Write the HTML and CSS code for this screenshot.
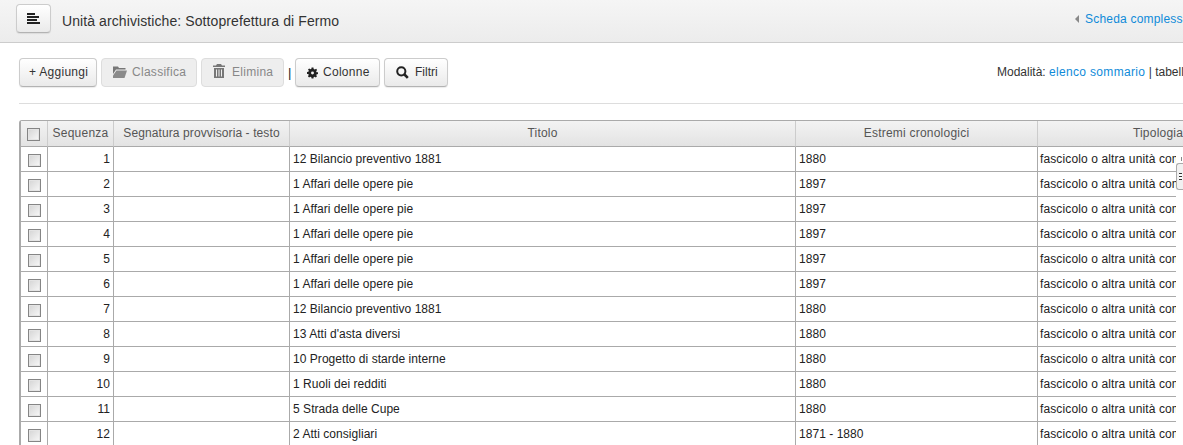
FILE: index.html
```html
<!DOCTYPE html>
<html lang="it">
<head>
<meta charset="utf-8">
<title>Unità archivistiche</title>
<link rel="stylesheet" href="styles.css">
</head>
<body>
<header class="topbar">
  <button class="btn menu-btn" type="button" aria-label="Menu">
    <svg width="13" height="11" viewBox="0 0 13 11"><path d="M0 0h8v2H0zM0 3h12v2H0zM0 6h10v2H0zM0 9h13v2H0z" fill="#222"/></svg>
  </button>
  <h1 class="page-title">Unità archivistiche: Sottoprefettura di Fermo</h1>
  <div class="top-link"><span class="arrow"></span><a href="#">Scheda complessiva</a></div>
</header>
<section class="toolbar">
  <div class="actions">
    <button class="btn btn-add" type="button">+ Aggiungi</button>
    <button class="btn disabled btn-class" type="button">
      <svg width="14" height="12" viewBox="0 0 14 12"><path d="M0 1.500V.5h5l1 1.500h6.500v1.500H3L0 8z" fill="#777"/><path d="M3.500 4.500H14L11.500 12H0V9.500z" fill="#8a8a8a"/></svg>Classifica</button>
    <button class="btn disabled btn-del" type="button">
      <svg width="12" height="14" viewBox="0 0 12 14"><path d="M4 0h4l1 1.500h3V3H0V1.500h3zM1 4h10v10H1zM3 5.500v7h1v-7zM5.500 5.500v7h1v-7zM8 5.500v7h1v-7z" fill="#777" fill-rule="evenodd"/></svg>Elimina</button>
    <span class="pipe">|</span>
    <button class="btn btn-cols" type="button">
      <svg width="11" height="12" viewBox="0 0 12 12"><path d="M5 0h2l.3 1.700 1.200.5L10 1.300 11 2.700 10 4l.4 1.100L12 5.300v1.900l-1.600.4L10 8.300l.9 1.300-1.300 1.300-1.300-.9-1.100.5L7 12H5l-.3-1.500-1.100-.5-1.300.9L1 9.600l.9-1.300-.5-1.100L0 7V5l1.500-.3.500-1.100L1.100 2.300 2.400 1l1.300.9 1.100-.5zM6 4.400a1.600 1.600 0 100 3.200 1.600 1.600 0 000-3.200z" fill="#222" fill-rule="evenodd"/></svg>Colonne</button>
    <button class="btn btn-filter" type="button">
      <svg width="13" height="13" viewBox="0 0 13 13"><circle cx="5.300" cy="5.300" r="4.100" fill="none" stroke="#222" stroke-width="2"/><path d="M8.500 8.500l3.300 3.300" stroke="#222" stroke-width="2.600"/></svg>Filtri</button>
  </div>
  <div class="mode">Modalità: <a href="#">elenco sommario</a> | tabella</div>
</section>
<hr class="rule">
<div class="grid-wrap">
  <table class="grid">
    <colgroup>
      <col class="c-check"><col class="c-seq"><col class="c-seg"><col class="c-title"><col class="c-date"><col class="c-type">
    </colgroup>
    <thead>
      <tr>
        <th><span class="check"></span></th>
        <th>Sequenza</th>
        <th class="seg-head">Segnatura provvisoria - testo</th>
        <th>Titolo</th>
        <th>Estremi cronologici</th>
        <th>Tipologia</th>
      </tr>
    </thead>
    <tbody>
      <tr><td><span class="check"></span></td><td class="num">1</td><td></td><td>12 Bilancio preventivo 1881</td><td>1880</td><td class="type">fascicolo o altra unità complessa</td></tr>
      <tr><td><span class="check"></span></td><td class="num">2</td><td></td><td>1 Affari delle opere pie</td><td>1897</td><td class="type">fascicolo o altra unità complessa</td></tr>
      <tr><td><span class="check"></span></td><td class="num">3</td><td></td><td>1 Affari delle opere pie</td><td>1897</td><td class="type">fascicolo o altra unità complessa</td></tr>
      <tr><td><span class="check"></span></td><td class="num">4</td><td></td><td>1 Affari delle opere pie</td><td>1897</td><td class="type">fascicolo o altra unità complessa</td></tr>
      <tr><td><span class="check"></span></td><td class="num">5</td><td></td><td>1 Affari delle opere pie</td><td>1897</td><td class="type">fascicolo o altra unità complessa</td></tr>
      <tr><td><span class="check"></span></td><td class="num">6</td><td></td><td>1 Affari delle opere pie</td><td>1897</td><td class="type">fascicolo o altra unità complessa</td></tr>
      <tr><td><span class="check"></span></td><td class="num">7</td><td></td><td>12 Bilancio preventivo 1881</td><td>1880</td><td class="type">fascicolo o altra unità complessa</td></tr>
      <tr><td><span class="check"></span></td><td class="num">8</td><td></td><td>13 Atti d'asta diversi</td><td>1880</td><td class="type">fascicolo o altra unità complessa</td></tr>
      <tr><td><span class="check"></span></td><td class="num">9</td><td></td><td>10 Progetto di starde interne</td><td>1880</td><td class="type">fascicolo o altra unità complessa</td></tr>
      <tr><td><span class="check"></span></td><td class="num">10</td><td></td><td>1 Ruoli dei redditi</td><td>1880</td><td class="type">fascicolo o altra unità complessa</td></tr>
      <tr><td><span class="check"></span></td><td class="num">11</td><td></td><td>5 Strada delle Cupe</td><td>1880</td><td class="type">fascicolo o altra unità complessa</td></tr>
      <tr><td><span class="check"></span></td><td class="num">12</td><td></td><td>2 Atti consigliari</td><td>1871 - 1880</td><td class="type">fascicolo o altra unità complessa</td></tr>
    </tbody>
  </table>
  <div class="gutter"></div>
  <div class="handle"><span></span></div>
</div>
</body>
</html>
```
FILE: styles.css
```css
* { box-sizing: border-box; }
html, body { margin: 0; height: 445px; overflow: hidden; background: #fff; }
body { font: 12px/17px "Liberation Sans", Arial, sans-serif; color: #333; width: 1183px; }
a { color: #0f8bd9; text-decoration: none; }

.topbar {
  height: 43px;
  display: flex;
  align-items: flex-start;
  padding: 4px 0 0 16px;
  background: linear-gradient(#f5f5f5, #ececec);
  border-bottom: 1px solid #ccc;
  white-space: nowrap;
  overflow: hidden;
}
.btn {
  height: 29px;
  padding: 0 0 0 9px;
  display: inline-flex;
  align-items: center;
  flex: none;
  font: 12px/17px "Liberation Sans", Arial, sans-serif;
  letter-spacing: .28px;
  color: #333;
  background: linear-gradient(#fff, #eaeaea);
  border: 1px solid #ccc;
  border-bottom-color: #b3b3b3;
  border-radius: 4px;
  box-shadow: 0 1px 1px rgba(0,0,0,.08);
  white-space: nowrap;
}
.menu-btn { width: 35px; justify-content: center; padding: 0; }
.btn-add { width: 78px; }
.btn-class { width: 96px; padding-left: 11px; gap: 5px; }
.btn-class svg { margin-bottom: 2px; }
.btn-del { width: 83px; padding-left: 11px; gap: 7px; }
.btn-del svg { margin-bottom: 4px; }
.btn-cols { width: 85px; padding-left: 11px; gap: 5px; }
.btn-filter { width: 64px; padding-left: 11px; gap: 6px; letter-spacing: 0; }
.page-title { margin: 0 0 0 11px; font-size: 14px; font-weight: 400; line-height: 34px; letter-spacing: .09px; color: #333; }
.top-link { margin-left: auto; flex: none; width: 120px; margin-right: -12px; display: flex; align-items: center; line-height: 30px; font-size: 12px; letter-spacing: .2px; }
.top-link .arrow { width: 0; height: 0; border: 4px solid transparent; border-right-color: #888; border-left-width: 0; margin-right: 6px; }

.toolbar {
  height: 60px;
  display: flex;
  justify-content: space-between;
  padding: 15px 0 0 19px;
  white-space: nowrap;
  overflow: hidden;
}
.actions { display: flex; gap: 4px; align-items: flex-start; }
.disabled { color: #888; background: #eee; box-shadow: none; border-color: #ddd; }
.pipe { width: 3px; line-height: 29px; color: #222; font-size: 13px; text-align: center; }
.mode { line-height: 29px; width: 186px; flex: none; overflow: hidden; }
.mode a { letter-spacing: .33px; }

.rule { margin: 0 0 0 19px; border: 0; border-top: 1px solid #ddd; height: 1px; }

.grid-wrap { position: relative; margin: 16px 0 0 19px; height: 325px; overflow: hidden; }
.grid {
  table-layout: fixed;
  width: 1260px;
  border-collapse: separate;
  border-spacing: 0;
  border-left: 2px solid #aaa;
  border-top: 1px solid #aaa;
  border-radius: 3px 0 0 0;
}
.c-check { width: 27px; }
.c-seq { width: 66px; }
.c-seg { width: 176px; }
.c-title { width: 506px; }
.c-date { width: 242px; }
.c-type { width: 241px; }
.grid th {
  height: 26px;
  padding: 0 2px;
  font-weight: 400;
  letter-spacing: .22px;
  color: #555;
  text-align: center;
  background: linear-gradient(#f3f3f3, #e3e3e3);
  border-right: 1px solid #ccc;
  border-bottom: 1px solid #aaa;
  white-space: nowrap;
  overflow: hidden;
}
.grid .seg-head { letter-spacing: .1px; }
.grid td {
  height: 25px;
  padding: 0 2px 0 3px;
  letter-spacing: .04px;
  color: #222;
  border-right: 1px solid #aaa;
  border-bottom: 1px solid #aaa;
  white-space: nowrap;
  overflow: hidden;
}
.grid .num { text-align: right; padding-right: 3px; }
.grid .type { padding-left: 2px; letter-spacing: .12px; }
.check {
  display: block;
  width: 13px;
  height: 13px;
  margin: 2px 0 0 4px;
  background: linear-gradient(135deg, #d4d4d4, #f8f8f8);
  border: 1px solid #858585;
  box-shadow: inset 0 0 0 1px #e4e4e4;
}
.gutter { position: absolute; left: 1157px; top: 27px; width: 7px; height: 298px; background: #fff; }
.gutter::before { content: ""; position: absolute; left: 5px; top: 10px; width: 1px; height: 4px; background: #888; }
.handle {
  position: absolute;
  left: 1157px;
  top: 43px;
  width: 7px;
  height: 27px;
  background: #f1f1f1;
  border: 1px solid #aaa;
  border-right: 0;
  border-radius: 3px 0 0 3px;
  display: flex;
  align-items: center;
  justify-content: center;
}
.handle span { width: 3px; height: 7px; border-top: 1px solid #333; border-bottom: 1px solid #333; background: linear-gradient(#fff 2px, #333 2px, #333 3px, #fff 3px); }
```
